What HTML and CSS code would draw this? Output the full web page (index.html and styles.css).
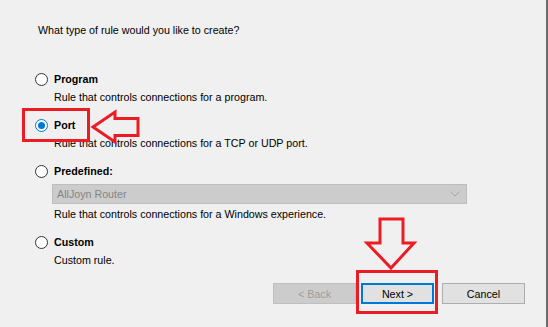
FILE: index.html
```html
<!DOCTYPE html>
<html>
<head>
<meta charset="utf-8">
<link rel="stylesheet" href="styles.css">
</head>
<body>
<div class="page">
  <div class="question">What type of rule would you like to create?</div>
  <div class="options">
    <div class="option">
      <div class="opt-head"><span class="radio"></span><span>Program</span></div>
      <div class="desc">Rule that controls connections for a program.</div>
    </div>
    <div class="option">
      <div class="opt-head"><span class="radio checked"></span><span>Port</span></div>
      <div class="desc">Rule that controls connections for a TCP or UDP port.</div>
    </div>
    <div class="option">
      <div class="opt-head"><span class="radio"></span><span>Predefined:</span></div>
      <div class="combo"><span>AllJoyn Router</span>
        <svg class="chev" width="10" height="6" viewBox="0 0 10 6"><polyline points="0.5,0.5 5,5 9.5,0.5" fill="none" stroke="#a8a8a8" stroke-width="1"/></svg>
      </div>
      <div class="desc">Rule that controls connections for a Windows experience.</div>
    </div>
    <div class="option">
      <div class="opt-head"><span class="radio"></span><span>Custom</span></div>
      <div class="desc">Custom rule.</div>
    </div>
  </div>
  <div class="buttons">
    <div class="btn back">&lt; Back</div>
    <div class="btn next">Next &gt;</div>
    <div class="btn cancel">Cancel</div>
  </div>
  <div class="mark mark-port"></div>
  <div class="mark mark-next"></div>
  <svg class="arrows" width="546" height="327" viewBox="0 0 546 327">
    <polygon points="93,127 115,112 115,118.5 138,118.5 138,135.5 115,135.5 115,142" fill="none" stroke="#ec1c24" stroke-width="3" stroke-linejoin="miter"/>
    <polygon points="380,219 403,219 403,243 414,243 391,268 367,243 380,243" fill="none" stroke="#ec1c24" stroke-width="3" stroke-linejoin="miter"/>
  </svg>
</div>
</body>
</html>
```
FILE: styles.css
```css
html, body {
  margin: 0;
  padding: 0;
  background: #f0f0f0;
}
.page {
  position: relative;
  width: 546px;
  height: 327px;
  background: #f0f0f0;
  border-right: 2px solid #6b6b6b;
  font-family: "Liberation Sans", Arial, sans-serif;
  font-size: 10.7px;
  color: #000;
  overflow: hidden;
}
.question {
  padding: 22px 0 0 38px;
  line-height: 16px;
}
.options {
  margin-top: 33px;
  padding-left: 35px;
  display: flex;
  flex-direction: column;
  gap: 12px;
}
.option {
  display: flex;
  flex-direction: column;
}
.opt-head {
  display: flex;
  align-items: center;
  gap: 6px;
  height: 16px;
  font-weight: bold;
}
.radio {
  width: 13px;
  height: 13px;
  box-sizing: border-box;
  border: 1px solid #333;
  border-radius: 50%;
  background: #fff;
  display: flex;
  align-items: center;
  justify-content: center;
}
.radio.checked {
  border-color: #0078d7;
}
.radio.checked::after {
  content: "";
  width: 7px;
  height: 7px;
  border-radius: 50%;
  background: #0078d7;
}
.desc {
  margin-left: 19px;
  margin-top: 2px;
  line-height: 16px;
}
.combo {
  margin: 5px 0 0 17px;
  width: 415px;
  height: 20px;
  box-sizing: border-box;
  background: #cccccc;
  border: 1px solid #bdbdbd;
  color: #858585;
  display: flex;
  align-items: center;
  justify-content: space-between;
  padding: 0 6px 0 4px;
}
.buttons {
  display: flex;
  justify-content: flex-end;
  margin-top: 15px;
  padding-right: 21px;
}
.btn {
  height: 21px;
  box-sizing: border-box;
  display: flex;
  align-items: center;
  justify-content: center;
  background: #e1e1e1;
  border: 1px solid #adadad;
}
.back {
  width: 83px;
  margin-right: 5px;
  background: #cccccc;
  border-color: #bfbfbf;
  color: #9d9d9d;
}
.next {
  width: 73px;
  margin-right: 8px;
  border: 2px solid #0078d7;
}
.cancel {
  width: 83px;
}
.mark {
  position: absolute;
  box-sizing: border-box;
  border: 3px solid #ec1c24;
}
.mark-port {
  left: 22px;
  top: 108px;
  width: 68px;
  height: 34px;
}
.mark-next {
  left: 356px;
  top: 270px;
  width: 82px;
  height: 44px;
}
.arrows {
  position: absolute;
  left: 0;
  top: 0;
}
```
